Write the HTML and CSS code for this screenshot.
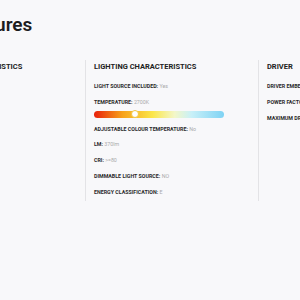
FILE: index.html
```html
<!DOCTYPE html>
<html>
<head>
<meta charset="utf-8">
<link rel="stylesheet" href="styles.css">
</head>
<body>
<div class="page">
  <h1 class="title">Features</h1>
  <div class="cols">
    <section class="col">
      <h2 class="col-head">GENERAL CHARACTERISTICS</h2>
    </section>
    <section class="col">
      <h2 class="col-head">LIGHTING CHARACTERISTICS</h2>
      <p class="row"><b>LIGHT SOURCE INCLUDED:</b> Yes</p>
      <p class="row"><b>TEMPERATURE:</b> 2700K</p>
      <div class="temp-bar"><span class="knob" style="left:31.5%"></span></div>
      <p class="row"><b>ADJUSTABLE COLOUR TEMPERATURE:</b> No</p>
      <p class="row"><b>LM:</b> 370lm</p>
      <p class="row"><b>CRI:</b> &gt;=80</p>
      <p class="row"><b>DIMMABLE LIGHT SOURCE:</b> NO</p>
      <p class="row"><b>ENERGY CLASSIFICATION:</b> E</p>
    </section>
    <section class="col">
      <h2 class="col-head">DRIVER</h2>
      <p class="row"><b>DRIVER EMBEDDED:</b> Yes</p>
      <p class="row"><b>POWER FACTOR:</b> 0.5</p>
      <p class="row"><b>MAXIMUM DRIVER CURRENT:</b> 350mA</p>
    </section>
  </div>
</div>
</body>
</html>
```
FILE: styles.css
```css
html, body {
  margin: 0;
  background: #f8f8fa;
  font-family: Roboto, "Liberation Sans", sans-serif;
  color: #222;
  overflow: hidden;
}
.page {
  margin-left: -88px;
  width: 700px;
}
.title {
  margin: 0;
  padding: 15px 0 0 46px;
  font-size: 19px;
  font-weight: 600;
  line-height: 20px;
  color: #1c1c1e;
}
.cols {
  display: flex;
  margin-top: 25px;
}
.col {
  width: 164px;
  flex: none;
  border-left: 1px solid #e3e3e6;
  padding: 2px 0 0 8px;
}
.col-head {
  margin: 0 0 7px;
  font-size: 7.5px;
  line-height: 10px;
  font-weight: 700;
  color: #222;
}
.row {
  margin: 0;
  font-size: 5.3px;
  line-height: 15.8px;
  color: #aaa;
}
.row b {
  color: #2a2a2a;
  font-weight: 700;
}
.temp-bar {
  position: relative;
  width: 130px;
  height: 7px;
  border-radius: 4px;
  margin: 0 0 4px;
  background: linear-gradient(to right, #e8200c 0%, #f7a21a 22%, #fbe64a 45%, #f3f7c8 62%, #c8f0f8 75%, #7fd3f4 100%);
}
.knob {
  position: absolute;
  top: 50%;
  width: 6px;
  height: 6px;
  margin: -4px 0 0 -4px;
  border-radius: 50%;
  background: #fff;
  border: 1px solid #f1c640;
}
```
